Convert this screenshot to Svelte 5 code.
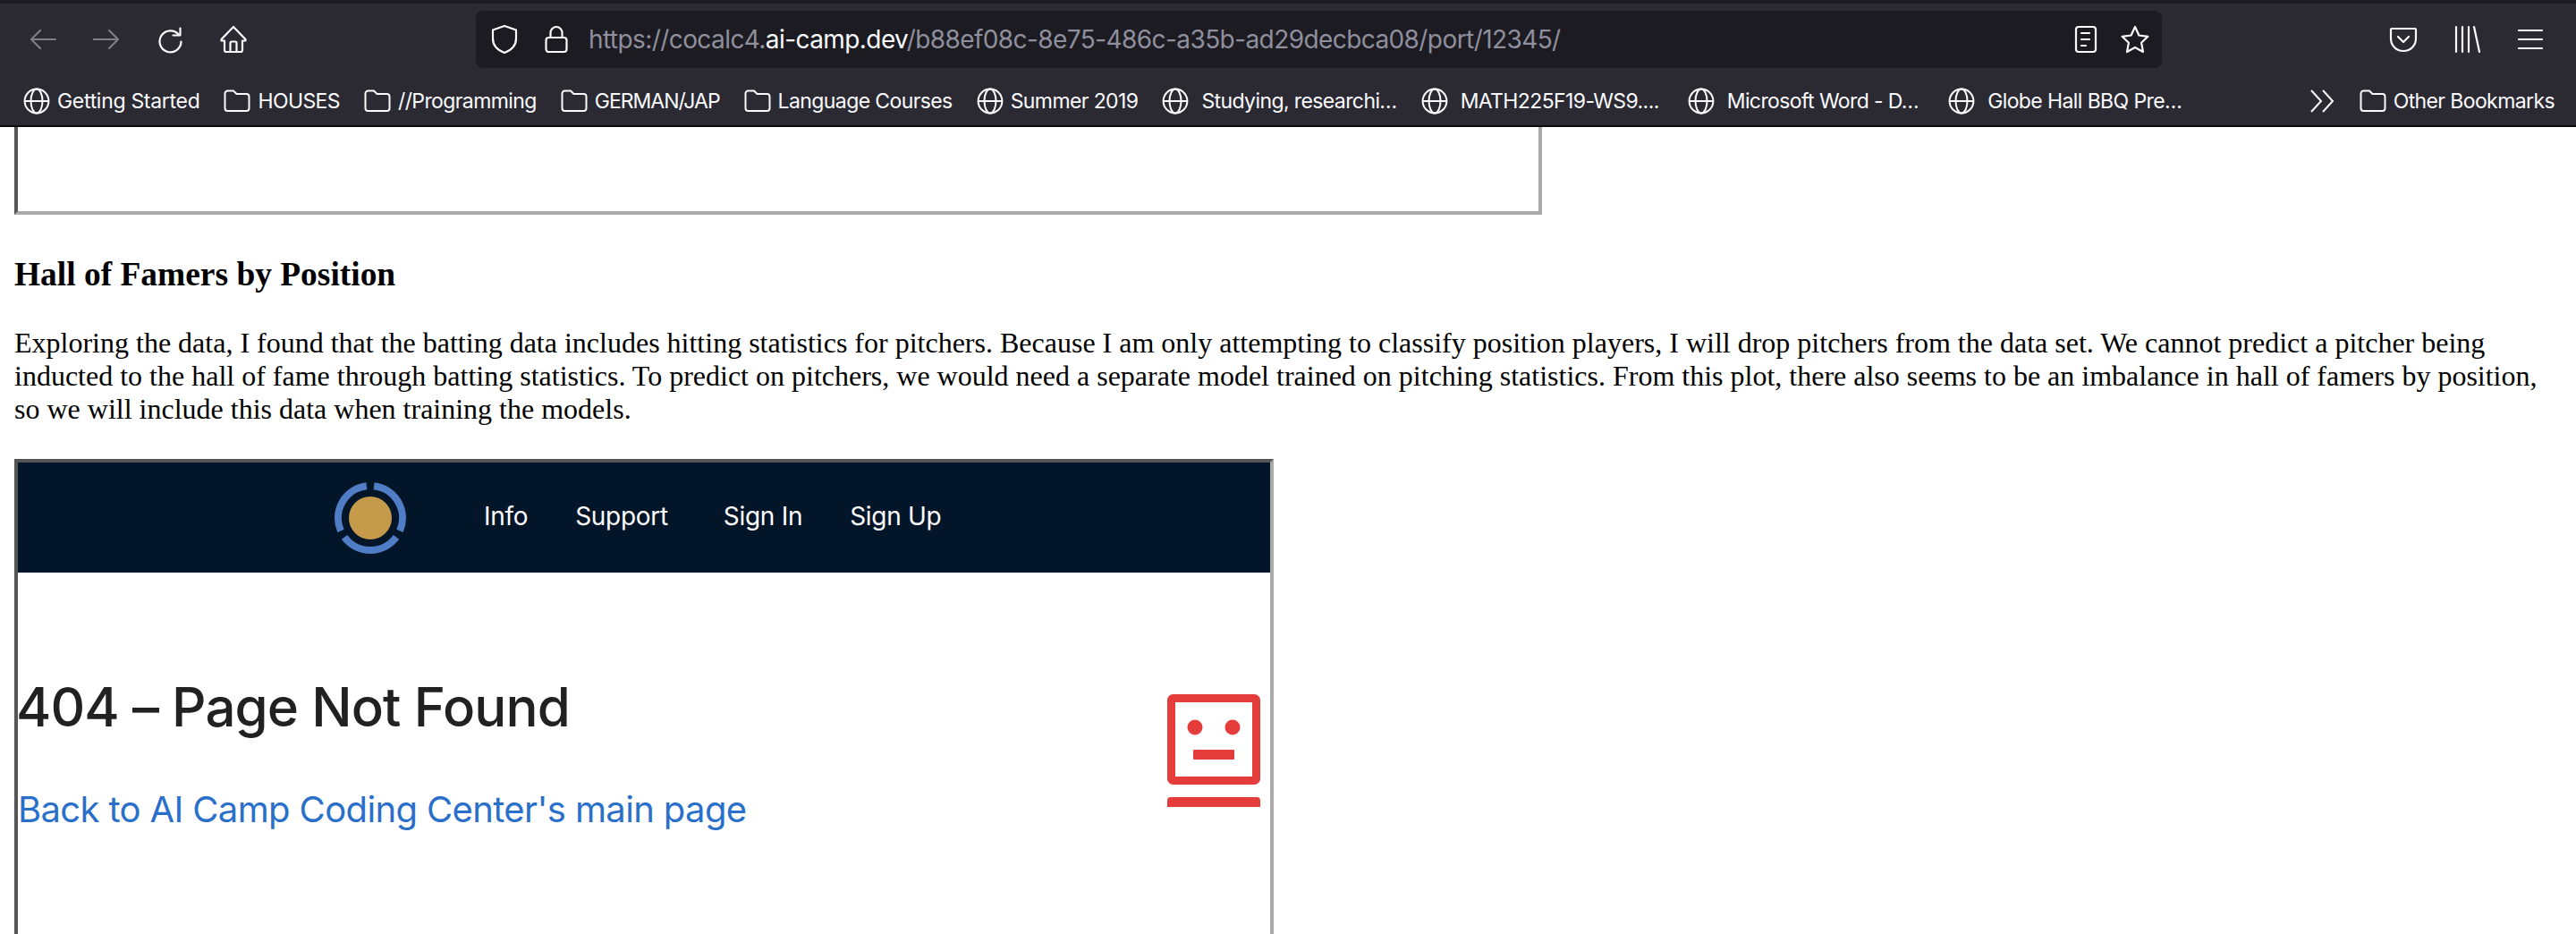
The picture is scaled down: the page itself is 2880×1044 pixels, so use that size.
<script>
  const marks = [
    { icon: 'globe', label: 'Getting Started', tone: 'loose' },
    { icon: 'folder', label: 'HOUSES' },
    { icon: 'folder', label: '//Programming' },
    { icon: 'folder', label: 'GERMAN/JAP', tone: 'tight' },
    { icon: 'folder', label: 'Language Courses' },
    { icon: 'globe', label: 'Summer 2019' },
    { icon: 'globe', label: 'Studying, researchi…', cut: true },
    { icon: 'globe', label: 'MATH225F19-WS9....', cut: true },
    { icon: 'globe', label: 'Microsoft Word - D…', cut: true, extra: 5 },
    { icon: 'globe', label: 'Globe Hall BBQ Pre…', cut: true, extra: 6 }
  ];
</script>

{#snippet glyph(kind)}
  {#if kind === 'globe'}
    <svg class="bm-icon" viewBox="0 0 30 30"><circle cx="15" cy="15" r="13.4"/><ellipse cx="15" cy="15" rx="6.5" ry="13.4"/><path d="M1.6 15h26.8"/></svg>
  {:else}
    <svg class="bm-icon" viewBox="0 0 30 30"><path d="M1.5 6.5a3 3 0 0 1 3-3h6.5l3.5 3.5h11a3 3 0 0 1 3 3v13a3 3 0 0 1-3 3h-21a3 3 0 0 1-3-3z"/></svg>
  {/if}
{/snippet}

<div class="window">
  <header class="chrome">
    <div class="toolbar">
      <svg class="tb dim" viewBox="0 0 32 32"><path d="M30 16H3M13 6 3 16l10 10"/></svg>
      <svg class="tb dim" viewBox="0 0 32 32"><path d="M2 16h27M19 6l10 10-10 10"/></svg>
      <svg class="tb" viewBox="0 0 32 32"><path d="M26 11a12 12 0 1 0 2.5 7.5"/><path d="M27.5 3.5V11.5H19.5" /></svg>
      <svg class="tb" viewBox="0 0 32 32"><path d="M16 2 2.5 16v1.5H6V28a2 2 0 0 0 2 2h16a2 2 0 0 0 2-2V17.5h3.5V16zM12.5 30V20a1.5 1.5 0 0 1 1.5-1.5h4a1.5 1.5 0 0 1 1.5 1.5v10"/></svg>
      <div class="urlbar">
        <svg class="tb" viewBox="0 0 32 32"><path d="M16 1 3 5.5V15c0 8 5 13 13 16 8-3 13-8 13-16V5.500z"/></svg>
        <svg class="tb lock" viewBox="0 0 32 32"><rect x="4.500" y="14" width="23" height="16" rx="3"/><path d="M9.500 14V8.500a6.500 6.500 0 0 1 13 0V14"/></svg>
        <span class="url">https://cocalc4.<b>ai-camp.dev</b>/b88ef08c-8e75-486c-a35b-ad29decbca08/port/12345/</span>
        <svg class="tb reader" viewBox="0 0 32 32"><rect x="5" y="2" width="22" height="28" rx="3"/><path d="M11 9h9M11 16h9M11 23h5"/></svg>
        <svg class="tb star" viewBox="0 0 32 32"><path d="m16 2 4.400 9.500 10 1.300-7.300 7 1.900 10.200-9-5-9 5 1.900-10.200-7.300-7 10-1.300z"/></svg>
      </div>
      <svg class="tb pocket" viewBox="0 0 32 32"><path d="M3 4h26a1 1 0 0 1 1 1v10c0 8-6 14-14 14S2 23 2 15V5a1 1 0 0 1 1-1z"/><path d="m10 13 6 6 6-6"/></svg>
      <svg class="tb" viewBox="0 0 32 32"><path d="M4 2v28M11 2v28M18 2v28M24 2l6 28"/></svg>
      <svg class="tb" viewBox="0 0 32 32"><path d="M3 6h26M3 16h26M3 26h26"/></svg>
    </div>
    <nav class="bookmarks">
      {#each marks as m}
        <div class="bm" class:cut={m.cut} class:loose={m.tone === 'loose'} class:tight={m.tone === 'tight'} style:margin-left={m.extra ? `${m.extra}px` : null}>
          {@render glyph(m.icon)}
          <span>{m.label}</span>
        </div>
      {/each}
      <svg class="chev" viewBox="0 0 28 26"><path d="M1 1l11 12L1 25M14 1l11 12-11 12"/></svg>
      <div class="bm other">
        {@render glyph('folder')}
        <span>Other Bookmarks</span>
      </div>
    </nav>
  </header>

  <main class="page">
    <div class="frame cutoff"></div>
    <h3>Hall of Famers by Position</h3>
    <p>Exploring the data, I found that the batting data includes hitting statistics for pitchers. Because I am only attempting to classify position players, I will drop pitchers from the data set. We cannot predict a pitcher being inducted to the hall of fame through batting statistics. To predict on pitchers, we would need a separate model trained on pitching statistics. From this plot, there also seems to be an imbalance in hall of famers by position, so we will include this data when training the models.</p>
    <div class="frame embed">
      <div class="site-nav">
        <svg class="logo" viewBox="0 0 80 80">
          <g fill="none" stroke="#4f7dc6" stroke-width="8">
            <path d="M44.07 4.230A36 36 0 0 1 73.010 54.350"/>
            <path d="M68.940 61.410A36 36 0 0 1 11.060 61.410"/>
            <path d="M6.990 54.350A36 36 0 0 1 35.930 4.230"/>
          </g>
          <circle cx="40" cy="40" r="24" fill="#c59a4b"/>
        </svg>
        <a class="n-info" href="#info">Info</a>
        <a class="n-support" href="#support">Support</a>
        <a class="n-in" href="#in">Sign In</a>
        <a class="n-up" href="#up">Sign Up</a>
      </div>
      <div class="site-body">
        <div>
          <h1>404 – Page Not Found</h1>
          <a class="back" href="#main">Back to AI Camp Coding Center's main page</a>
        </div>
        <svg class="robot" viewBox="0 0 104 126">
          <rect x="4.500" y="4.500" width="95" height="92" rx="2" fill="none" stroke="#e53c3c" stroke-width="9"/>
          <circle cx="31" cy="37" r="8.500" fill="#e53c3c"/>
          <circle cx="73" cy="37" r="8.500" fill="#e53c3c"/>
          <rect x="29" y="62" width="46" height="11" rx="1" fill="#e53c3c"/>
          <path d="M0 126v-7a4 4 0 0 1 4-4h96a4 4 0 0 1 4 4v7z" fill="#e53c3c"/>
        </svg>
      </div>
    </div>
  </main>
</div>

<style>
  :global(body) { margin: 0; background: #fff; }
  .window { height: 1044px; overflow: hidden; display: flex; flex-direction: column; }
  .chrome {
    flex: none;
    height: 142px;
    box-sizing: border-box;
    background: #2b2a33;
    border-top: 4px solid #1c1b22;
    border-bottom: 2px solid #0c0c0f;
    font-family: Inter, "Liberation Sans", sans-serif;
    color: #fbfbfe;
  }
  .toolbar { display: flex; align-items: center; height: 72px; padding: 8px 32px 0; box-sizing: border-box; gap: 39px; }
  .tb { width: 32px; height: 32px; flex: none; fill: none; stroke: #fbfbfe; stroke-width: 2.2; stroke-linejoin: round; stroke-linecap: round; }
  .dim { opacity: 0.4; }
  .urlbar {
    width: 1885px;
    height: 64px;
    box-sizing: border-box;
    margin: 0 215px 0 216px;
    background: #1c1b22;
    border-radius: 8px;
    display: flex;
    align-items: center;
    padding-left: 16px;
    color: #8f8f9d;
  }
  .lock { margin-left: 26px; }
  .url { margin-left: 20px; font-size: 28px; letter-spacing: -0.58px; white-space: nowrap; flex: 1; }
  .url b { font-weight: 400; color: #fbfbfe; }
  .reader { margin-right: 23px; }
  .star { margin-right: 14px; }
  .bookmarks { display: flex; align-items: center; height: 64px; box-sizing: border-box; padding: 10px 0 0 26px; gap: 27px; font-size: 23px; letter-spacing: -0.6px; }
  .bm { display: flex; align-items: center; gap: 8px; white-space: nowrap; flex: none; }
  .bm.cut { gap: 14px; }
  .bm.loose { letter-spacing: -0.3px; }
  .bm.tight { letter-spacing: -1px; }
  .bm-icon { width: 30px; height: 30px; fill: none; stroke: #fbfbfe; stroke-width: 2; flex: none; }
  .chev { width: 28px; height: 26px; flex: none; fill: none; stroke: #fbfbfe; stroke-width: 2; margin-left: auto; }
  .other { margin-right: 24px; }

  .page { flex: 1; min-height: 0; overflow: hidden; padding: 0 16px; font-family: "Liberation Serif", "Times New Roman", serif; color: #000; }
  .frame { box-sizing: border-box; border-style: solid; border-width: 4px; border-color: #555 #aaa #aaa #555; }
  .cutoff { width: 1708px; height: 98px; border-top: 0; }
  h3 { margin: 45px 0 37px; font-size: 37.440px; line-height: 43px; font-weight: 700; }
  p { margin: 0 0 37px; font-size: 32px; line-height: 37px; }
  .embed { width: 1408px; height: 900px; background: #fff; font-family: Inter, "Liberation Sans", sans-serif; }
  .site-nav { height: 123px; background: #031528; display: flex; align-items: center; padding: 0 0 3px 354px; box-sizing: border-box; font-size: 28px; letter-spacing: -0.3px; }
  .logo { width: 80px; height: 80px; flex: none; margin: 3px 87px 0 0; }
  .site-nav a { color: #fff; text-decoration: none; white-space: nowrap; }
  .n-support { margin-left: 53px; }
  .n-in { margin-left: 62px; }
  .n-up { margin-left: 53px; }
  .site-body { display: flex; justify-content: space-between; align-items: flex-start; padding: 114px 11px 0 0; }
  h1 { margin: 0 0 55px -2px; font-size: 60px; line-height: 72px; font-weight: 500; letter-spacing: -0.9px; color: #212121; white-space: nowrap; }
  .back { font-size: 40px; line-height: 48px; letter-spacing: -0.63px; color: #2a6fc9; text-decoration: none; display: block; white-space: nowrap; }
  .robot { width: 104px; height: 126px; flex: none; margin-top: 22px; }
</style>
